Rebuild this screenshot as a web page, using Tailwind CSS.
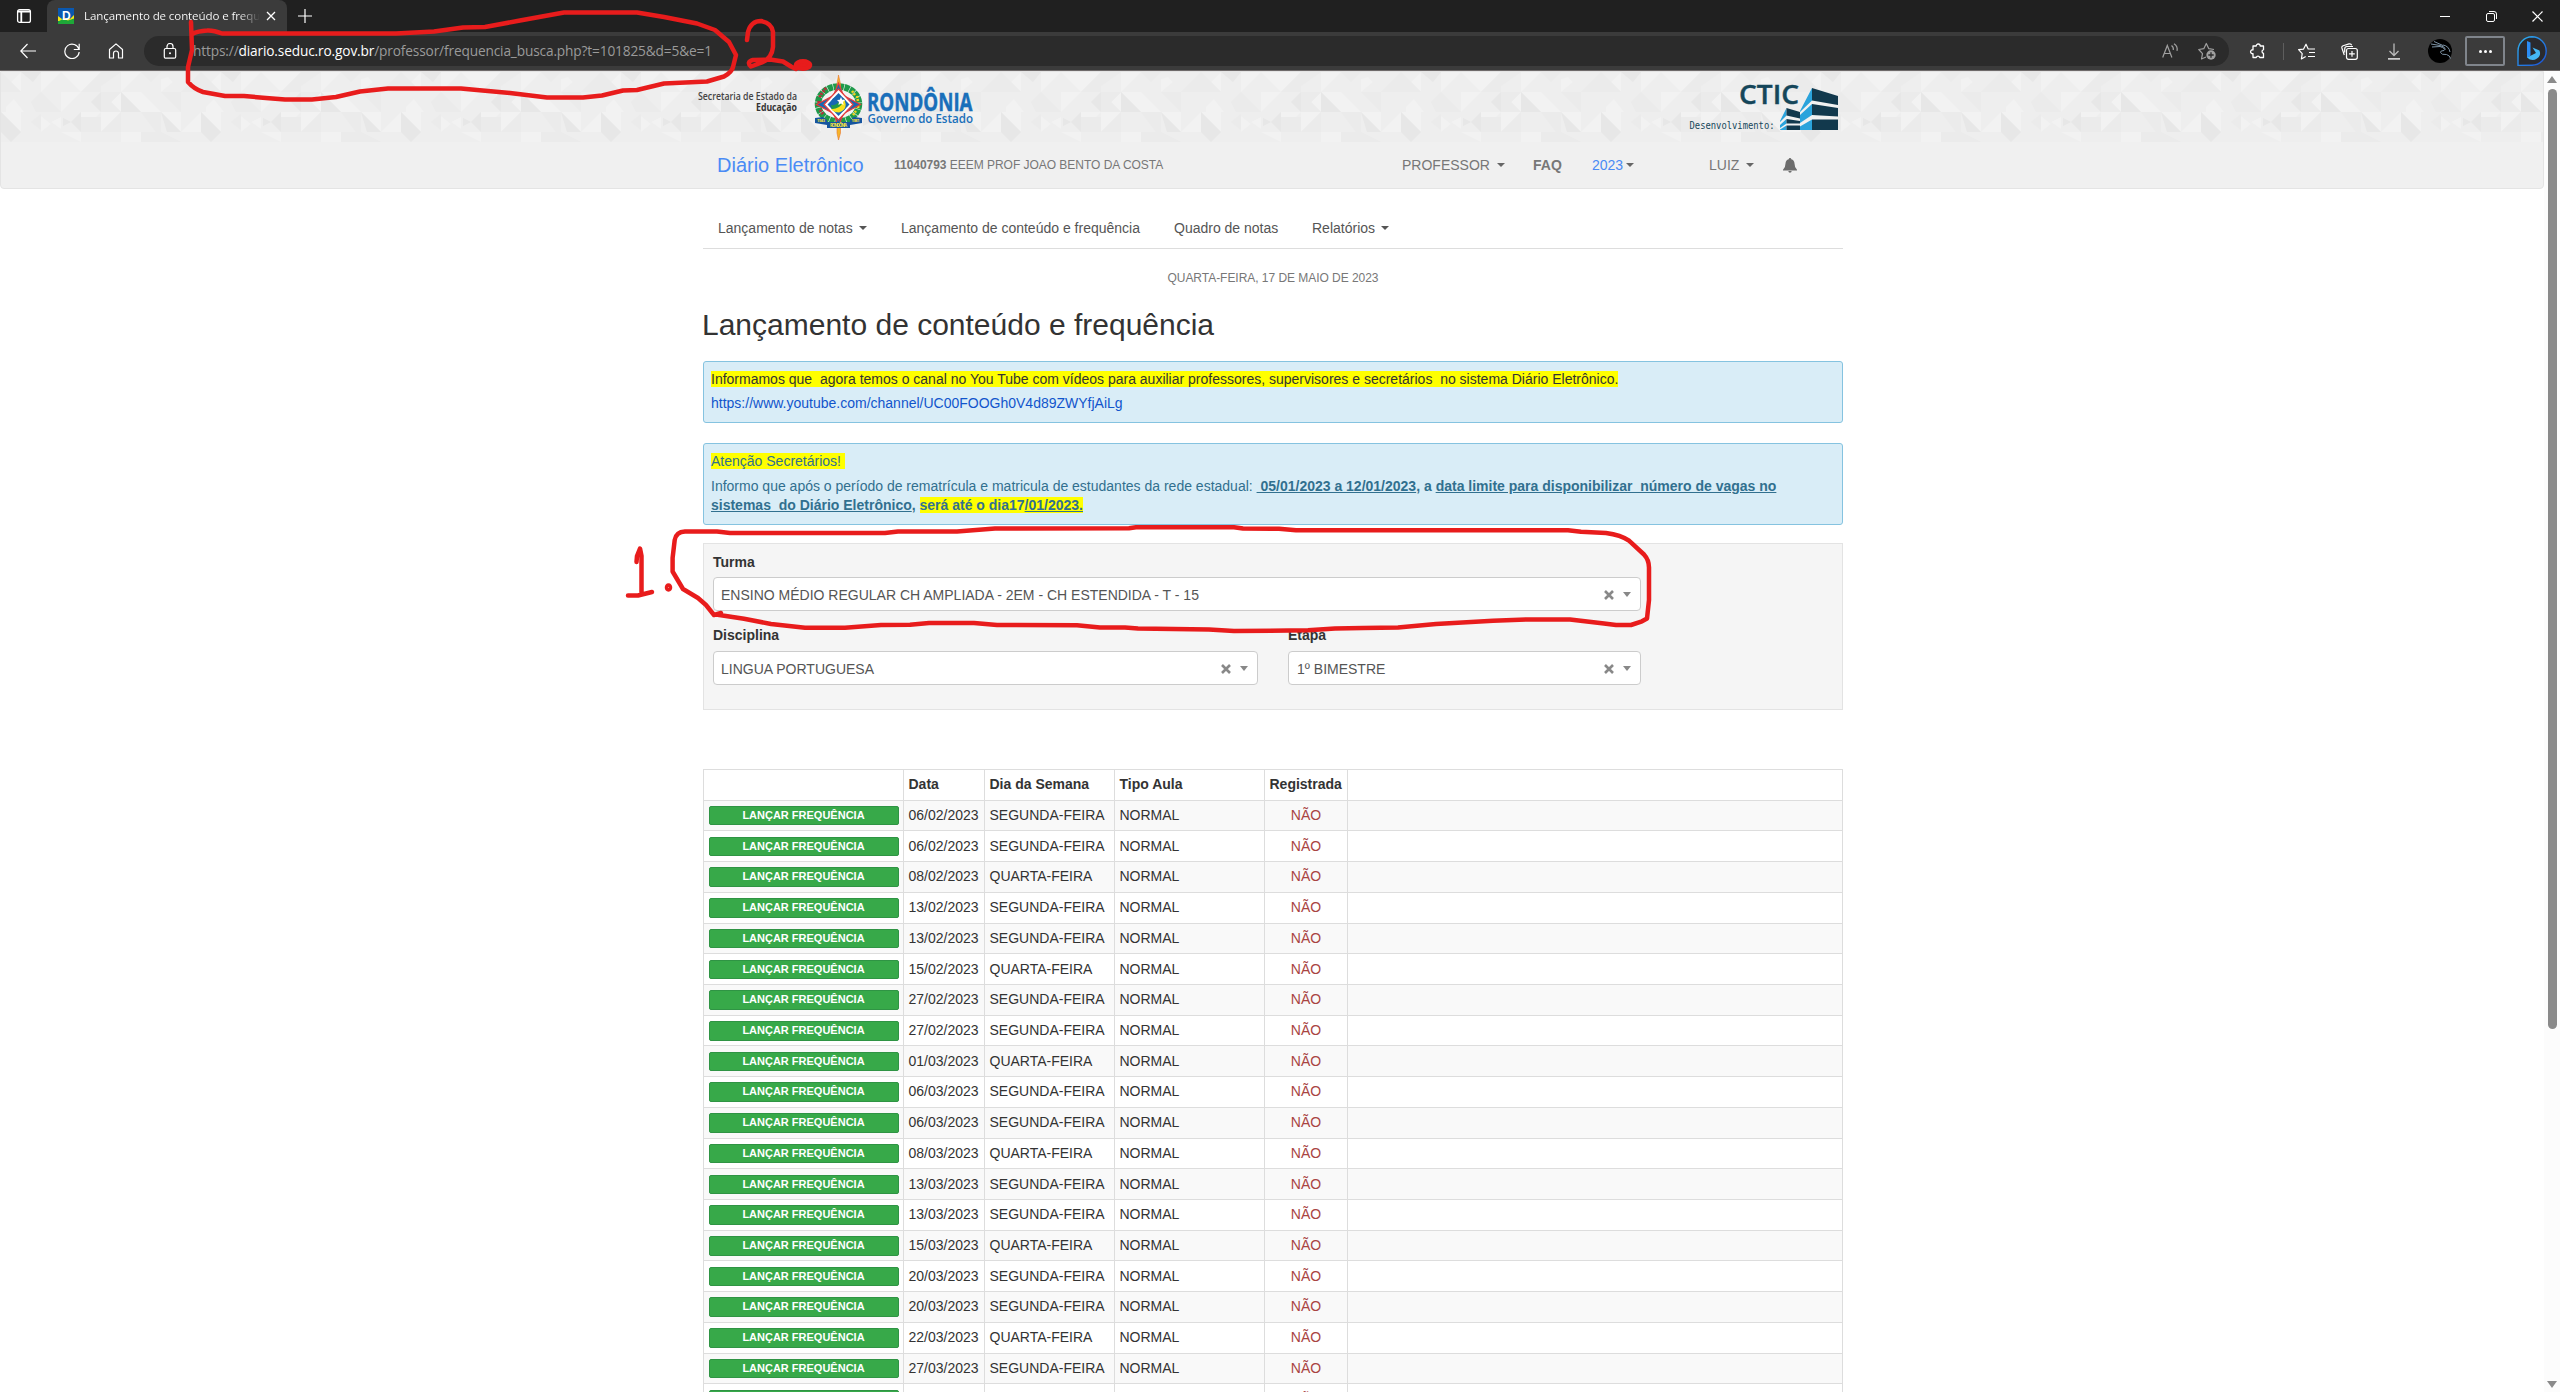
<!DOCTYPE html>
<html lang="pt-BR">
<head>
<meta charset="utf-8">
<title>Lançamento de conteúdo e frequência</title>
<script src="https://cdn.jsdelivr.net/npm/@tailwindcss/browser@4"></script>
</head>
<body class="relative flex h-[1392px] w-[2560px] flex-col overflow-hidden bg-white font-['Liberation_Sans',sans-serif] text-sm leading-5 text-[#333]">

<!-- Tab strip -->
<div class="flex h-8 shrink-0 items-stretch bg-[#202020] text-white">
  <div class="flex w-[47px] items-center pl-4">
    <svg class="size-4" viewBox="0 0 16 16" fill="none" stroke="#fff" stroke-width="1.3"><rect x="1.6" y="1.6" width="12.8" height="12.8" rx="2"/><path d="M2 3.5h12M5.3 4.5v9.500" stroke-width="1.800"/></svg>
  </div>
  <div class="flex w-[240px] items-center rounded-t-lg bg-[#3b3b3b] pl-[11px]">
    <svg class="size-4" viewBox="0 0 16 16"><rect width="16" height="16" fill="#0a58b0"/><path d="M0 8l4 3 4-1 4 1 4-4v6H0z" fill="#f5e614"/><path d="M0 16v-2.500l5-2.500 5 1.500 6-2V16z" fill="#1ea838"/><text x="4" y="12" font-size="12" font-weight="700" fill="#fff" font-family="Liberation Sans, sans-serif">D</text></svg>
    <div class="ml-[10px] w-[176px] overflow-hidden whitespace-nowrap bg-linear-to-r from-white from-88% to-transparent bg-clip-text font-['Open_Sans',sans-serif] text-[11.6px] leading-4 tracking-[-0.13px] text-transparent">Lançamento de conteúdo e frequência</div>
    <svg class="ml-[5px] size-3" viewBox="0 0 12 12" stroke="#fff" stroke-width="1.3"><path d="M2 2l8 8M10 2l-8 8"/></svg>
  </div>
  <div class="flex items-center pl-[10px]"><svg class="size-4" viewBox="0 0 16 16" stroke="#fff" stroke-width="1.200"><path d="M8 1v14M1 8h14"/></svg></div>
  <div class="ml-auto flex w-[120px] items-center justify-between pr-[17px]">
    <svg class="h-3 w-[10px]" viewBox="0 0 10 12" stroke="#fff"><path d="M0 6.500h10"/></svg>
    <svg class="size-[11px]" viewBox="0 0 11 11" fill="none" stroke="#fff"><rect x=".5" y="2.500" width="8" height="8" rx="1.500"/><path d="M3 .5h5a2.500 2.500 0 0 1 2.500 2.500v5"/></svg>
    <svg class="size-[11px]" viewBox="0 0 11 11" stroke="#fff" stroke-width="1.200"><path d="M.5.5l10 10M10.500.5l-10 10"/></svg>
  </div>
</div>

<!-- Toolbar -->
<div class="flex h-[39px] shrink-0 items-center border-b border-[#6e6a6a] bg-[#3b3b3b]">
  <svg class="ml-5 size-4" viewBox="0 0 16 16" fill="none" stroke="#fff" stroke-width="1.200"><path d="M16 8H.8M7.500 1L.8 8l6.700 7"/></svg>
  <svg class="ml-[28px] size-4" viewBox="0 0 16 16" fill="none" stroke="#fff" stroke-width="1.200"><path d="M15 6.500A7.200 7.200 0 1 0 15.200 9M15.200.8v5.700H9.800"/></svg>
  <svg class="ml-[28px] size-4" viewBox="0 0 16 16" fill="none" stroke="#fff" stroke-width="1.200" stroke-linejoin="round"><path d="M1.500 6.500L8 .9l6.500 5.600V15h-4v-4.500a2.500 2.500 0 0 0-5 0V15h-4z"/></svg>
  <div class="ml-[20px] flex h-[30px] w-[2085px] items-center rounded-full bg-[#2b2b2b]">
    <svg class="ml-[18px] size-4" viewBox="0 0 16 16" fill="none" stroke="#fff" stroke-width="1.200"><rect x="2.300" y="5.500" width="11.400" height="9.700" rx="1.500"/><path d="M5 5.500V3.500a3 3 0 0 1 6 0v2"/><circle cx="8" cy="10.300" r="1" fill="#fff" stroke="none"/></svg>
    <svg class="ml-[15px] h-5 w-[522px]" viewBox="0 0 522 20" font-family="Open Sans, sans-serif" font-size="13.700" fill="#9a9a9a"><text x="0" y="14.800" textLength="519">https://<tspan fill="#fff">diario.seduc.ro.gov.br</tspan>/professor/frequencia_busca.php?t=101825&amp;d=5&amp;e=1</text></svg>
    <svg class="ml-auto h-4 w-[17px]" viewBox="0 0 17 16" fill="none" stroke="#a0a0a0" stroke-width="1.200"><path d="M.7 14.500L5.300 2.500l4.600 12M2.400 10.500h6M9.500 2.500q2.300 1.700 1.800 4.500M12 .8q4 2.700 3 7"/></svg>
    <svg class="mr-[13px] ml-[19px] h-[18px] w-[18px]" viewBox="0 0 18 18" fill="none" stroke="#a0a0a0" stroke-width="1.200" stroke-linejoin="round"><path d="M8 15l-4.500 2 1-5.400L.8 7.500l5-.8L8.300 1.500l2.500 5.200 5.200.8"/><circle cx="13" cy="13" r="4.700" fill="#a0a0a0" stroke="none"/><path d="M13 10.300v5.400M10.300 13h5.400" stroke="#2b2b2b" stroke-width="1.300"/></svg>
  </div>
  <svg class="ml-[20px] size-[17px]" viewBox="0 0 17 17" fill="none" stroke="#fff" stroke-width="1.300" stroke-linejoin="round"><path d="M4 3h3.200a2 2 0 0 1 4 0h3.300v3.700a1.900 1.900 0 0 0 0 3.700v4.100H10.800a1.900 1.900 0 0 0-3.600 0H4v-3.800a2 2 0 1 1 0-3.900z"/></svg>
  <div class="ml-[17px] h-[17px] w-px bg-[#5e5e5e]"></div>
  <svg class="ml-[14px] h-[17px] w-[17px]" viewBox="0 0 17 17" fill="none" stroke="#fff" stroke-width="1.200" stroke-linejoin="round"><path d="M15.500 6H10.200L8 1.200 5.600 6.100l-5 .6 3.600 3.900-.8 5.400 4.300-2.500M11 9.500h6M10 13.500h7M11 6h6"/></svg>
  <svg class="ml-[26px] h-[17px] w-[17px]" viewBox="0 0 17 17" fill="none" stroke="#fff" stroke-width="1.200" stroke-linejoin="round"><rect x="5.500" y="5.500" width="10.800" height="10.800" rx="2"/><path d="M11 8v5.800M8 10.900h5.800M3.300 12L.9 5q-.4-1.600 1.200-2.200L8 .9q2-.5 2.700 1.400M3.700 9.500V6q0-2.500 2.300-2.500h6"/></svg>
  <svg class="ml-[30px] h-[17px] w-3" viewBox="0 0 12 17" fill="none" stroke="#fff" stroke-width="1.300"><path d="M6 .5v12M1.500 8L6 12.500 10.500 8" stroke="#bbb"/><path d="M0 15.900h12"/></svg>
  <svg class="ml-[28px] size-6" viewBox="0 0 24 24" fill="none"><circle cx="12" cy="12" r="12" fill="#000"/><path d="M3 5l9 1.500q5 1 5.500 4M6 2.500l9 4M4 8l8-.5q6 2 4 4-4 0-3.500 2 1 2.500 6 2 3.500 1 4 4M15 6q6 1 7 7" stroke="#7d93a5" stroke-width="1"/></svg>
  <div class="ml-[13px] flex h-[30px] w-[40px] items-center justify-center gap-[2px] rounded-xs border-2 border-[#80858c]"><i class="size-[3px] rounded-full bg-white"></i><i class="size-[3px] rounded-full bg-white"></i><i class="size-[3px] rounded-full bg-white"></i></div>
  <svg class="ml-[12px] h-[30px] w-[30px]" viewBox="0 0 30 30"><defs><linearGradient id="bing" x1="0" y1="0" x2="1" y2="1"><stop offset="0" stop-color="#2fb4f0"/><stop offset="1" stop-color="#1b4fd8"/></linearGradient></defs><path d="M15 .8A14.200 14.200 0 1 1 15 29.200L1 29.400V15A14.200 14.200 0 0 1 15 .8z" fill="#2a2a2e" stroke="url(#bing)" stroke-width="1.400"/><path d="M10 5l3.500 1.500v13L10 22z" fill="#2a8cf5"/><path d="M10 21.500L19 17l-3.500-5.500 7 3q2 5-2.500 8-5 3.500-10-1z" fill="#45b8f5"/></svg>
</div>

<!-- Page -->
<div class="flex min-h-0 flex-1">
  <div class="flex w-[2544px] flex-col">
    <header class="h-[118px] shrink-0 rounded-b border border-[#e4e4e4] bg-[#f0f0f0]">
      <div class="relative h-[70px]">
        <svg class="absolute inset-0 h-[70px] w-[2542px]">
          <defs><pattern id="tri" x="100" y="0" width="200" height="70" patternUnits="userSpaceOnUse">
            <rect width="200" height="70" fill="#eeeeee"/>
            <g fill="#f2f2f2"><path d="M20 0h20L20 20zM60 20V7l7-2 5 5-12 10zM110 10l10-10v20zM140 0h20l20 20 20-20h-40l-20 20zM10 30l10-10v20zM20 20h20l20 20H40zM160 20h20l-20 20zM0 40h20L0 60zM60 40h20v20zM80 60l20-20v20zM100 40h20v20zM140 44l10 8-10 8zM180 40h20l-20 20zM20 60h20v10H20zM160 60h20v10zM105 35l8-8 10 13h-18zM150 50l10-5v12z"/></g>
            <g fill="#ebebeb"><path d="M0 0h20L0 14zM40 0h20L50 10zM180 20l20-20v20zM0 20h20L10 30l10 10H0zM60 20h20v20zM130 30l10-10 20 20h-25zM90 10L100 0l20 20H80zM40 40h20v20H55zM0 60l20-20v20zM130 50l10-8v16zM40 60h20l20 10H40zM180 45h20v15h-20z"/></g>
            <g fill="#e7e7e7"><path d="M20 20l20 20H20zM120 0h20l-8 10zM60 40l20 20H66zM100 40l20 20h-20zM170 50l10-10v20zM190 30l10-10v20zM100 60h20l-10 10zM162 46l8 4-8 4z"/></g>
          </pattern></defs>
          <rect width="2542" height="70" fill="url(#tri)"/>
        </svg>
        <svg class="absolute top-0 left-[689px] h-[70px] w-[300px]" viewBox="690 72 300 70" font-family="Open Sans, sans-serif">
          <text x="698" y="100" font-size="10" fill="#444" font-weight="600" textLength="99" lengthAdjust="spacingAndGlyphs">Secretaria de Estado da</text>
          <text x="756" y="111" font-size="10" fill="#333" font-weight="700" textLength="41" lengthAdjust="spacingAndGlyphs">Educação</text>
          <ellipse cx="838.500" cy="104" rx="20.500" ry="17.500" fill="#f3f3f3" stroke="#1f9a4a" stroke-width="6.500" stroke-dasharray="5 .6"/>
          <path d="M826 88l-3 4M822 93l-3 5M819 101l-1 5M820 110l3 4" stroke="#b5303a" stroke-width="3" stroke-dasharray="2 1"/>
          <path d="M852 91l3 4M857 96l1 5M859 103l-1 5M856 111l-3 4" stroke="#f4d320" stroke-width="2.500" stroke-dasharray="2 1"/>
          <path d="M838.500 75l2 9v49l-2 7-1.500-7V84z" fill="#f5b52a" stroke="#e9762b" stroke-width=".6"/>
          <path d="M838.500 83l5 12.500 17 9-17 9-5 12.500-5-12.500-17-9 17-9z" fill="#1767b3" stroke="#e33c3c" stroke-width="1.200"/>
          <path d="M838.500 89l14.500 15.500-14.500 15.500-14.500-15.500z" fill="#fff" stroke="#e33c3c" stroke-width="1.200"/>
          <path d="M838.500 93l11 11.500-11 11.500-11-11.500z" fill="#1767b3"/>
          <circle cx="838.500" cy="104.500" r="8" fill="#1767b3"/><path d="M831 109q9-1 13-10 5 10-5 13.500-5 0-8-3.500z" fill="#f6e11d"/><path d="M831 105q6 1 9-5l3 2q-3 7-11 7z" fill="#1f9a4a"/><path d="M841 97l1.200 2.800 2.800.3-2 2 .6 3-2.600-1.600-2.600 1.600.6-3-2-2 2.800-.3z" fill="#fff"/>
          <path d="M815 118l8-1 4 3v5l-12-2zM862 118l-8-1-4 3v5l12-2zM827 122h23v6h-23z" fill="#16559f"/><text x="830" y="127" font-size="4.500" fill="#f4e23a" font-weight="700" textLength="17">RONDÔNIA</text><text x="817" y="122.300" font-size="4" fill="#f4e23a" font-weight="700" textLength="8">1943</text><text x="851.500" y="122.300" font-size="4" fill="#f4e23a" font-weight="700" textLength="8">1981</text>
          <text x="867" y="111" font-size="25.500" fill="#196fba" stroke="#196fba" stroke-width=".5" font-weight="700" textLength="105.500" lengthAdjust="spacingAndGlyphs">RONDÔNIA</text>
          <text x="867.500" y="123" font-size="12.500" fill="#196fba" font-weight="600" textLength="105.500" lengthAdjust="spacingAndGlyphs">Governo do Estado</text>
        </svg>
        <svg class="absolute top-0 left-[1679px] h-[70px] w-[180px]" viewBox="1680 72 180 70">
          <text x="1739" y="104" font-family="Open Sans, sans-serif" font-size="27" font-weight="600" fill="#15465a" stroke="#15465a" stroke-width=".4" textLength="60" lengthAdjust="spacingAndGlyphs">CTIC</text>
          <text x="1689.500" y="129" font-family="DejaVu Sans Mono, monospace" font-size="10" fill="#15465a" textLength="85" lengthAdjust="spacingAndGlyphs">Desenvolvimento:</text>
          <path d="M1800 111l12-23v42h-12zM1780 121l6.500-13v22h-6.500z" fill="#2aa3dc"/>
          <path d="M1786.500 108l13.500 4v18h-13.500zM1812 88l26 8v34h-26z" fill="#12394d"/>
          <path d="M1780 122l6.500-6.500 13.500 3v2.500l-13.500-2-6.500 6zM1780 128l6.500-4.500h13.500v2h-13.500l-6.500 4zM1800 112l12-11.500 26 4.500v3l-26-4-12 11zM1800 123l12-8 26 1.500v3h-26l-12 7z" fill="#f1f1f1"/>
        </svg>
      </div>
      <nav class="ml-[716px] flex h-[46px] items-center text-[#777]">
        <a class="w-[177px] text-[20px] text-[#4a8bf5]">Diário Eletrônico</a>
        <span class="w-[508px] text-xs tracking-[-0.03px]"><b>11040793</b> EEEM PROF JOAO BENTO DA COSTA</span>
        <a class="flex w-[131px] items-center gap-[7px]">PROFESSOR<i class="border-x-4 border-t-4 border-x-transparent border-t-[#666]"></i></a>
        <b class="w-[59px]">FAQ</b>
        <a class="flex w-[117px] items-center gap-[3px] text-[#4a8bf5]">2023<i class="border-x-4 border-t-4 border-x-transparent border-t-[#666]"></i></a>
        <a class="flex w-[74px] items-center gap-[7px]">LUIZ<i class="border-x-4 border-t-4 border-x-transparent border-t-[#666]"></i></a>
        <svg class="h-[15px] w-[14px]" viewBox="0 0 14 15" fill="#6c6c6c"><path d="M7 0q1.200 0 1.300 1.200 3 .8 3.200 4.300 0 4 2.500 6.300v.7H0v-.7q2.500-2.300 2.500-6.300.2-3.500 3.200-4.300Q5.800 0 7 0zM5.300 13h3.400Q8.500 14.700 7 14.700T5.300 13z"/></svg>
      </nav>
    </header>

    <main class="ml-[703px] flex w-[1140px] flex-col pt-[18px]">
      <nav class="flex h-[42px] items-center border-b border-[#ddd] pl-[15px] text-[#555]">
        <a class="flex w-[183px] items-center gap-[6px]">Lançamento de notas<i class="border-x-4 border-t-4 border-x-transparent border-t-[#555]"></i></a>
        <a class="w-[273px]">Lançamento de conteúdo e frequência</a>
        <a class="w-[138px]">Quadro de notas</a>
        <a class="flex items-center gap-[6px]">Relatórios<i class="border-x-4 border-t-4 border-x-transparent border-t-[#555]"></i></a>
      </nav>
      <p class="mt-[19px] text-center text-xs leading-5 tracking-[-0.04px] text-[#777]">QUARTA-FEIRA, 17 DE MAIO DE 2023</p>
      <h1 class="mt-[20px] -ml-px text-[30px] leading-[33px]">Lançamento de conteúdo e frequência</h1>

      <section class="mt-[20px] h-[62px] rounded-[3px] border border-[#85c3e0] bg-[#d9edf7] px-[7px] pt-[7px]">
        <p><span class="bg-[#ff0] whitespace-pre">Informamos que  agora temos o canal no You Tube com vídeos para auxiliar professores, supervisores e secretários  no sistema Diário Eletrônico.</span></p>
        <p class="mt-1 text-[#1155cc]">https://www.youtube.com/channel/UC00FOOGh0V4d89ZWYfjAiLg</p>
      </section>

      <section class="mt-[20px] h-[82px] rounded-[3px] border border-[#85c3e0] bg-[#d9edf7] px-[7px] pt-[7px] text-[#31708f]">
        <p><span class="bg-[#ff0] whitespace-pre">Atenção Secretários! </span></p>
        <p class="mt-[6px] leading-[19.400px] whitespace-pre">Informo que após o período de rematrícula e matricula de estudantes da rede estadual: <b><u> 05/01/2023 a 12/01/2023</u>, a <u>data limite para disponibilizar  número de vagas no</u></b>
<b><u>sistemas  do Diário Eletrônico</u>, <span class="bg-[#ff0]">será até o dia17<u>/01/2023.</u></span></b></p>
      </section>

      <section class="mt-[18px] h-[167px] border border-[#e3e3e3] bg-[#f5f5f5] pt-[8px] pl-[9px]">
        <label class="block font-bold">Turma</label>
        <div class="mt-[5px] flex h-[34px] w-[928px] items-center rounded border border-[#ccc] bg-white pt-px pl-[7px] text-[#555]">ENSINO MÉDIO REGULAR CH AMPLIADA - 2EM - CH ESTENDIDA - T - 15
          <svg class="ml-auto size-[10px]" viewBox="0 0 10 10" stroke="#888" stroke-width="2.600"><path d="M1 1l8 8M9 1L1 9"/></svg>
          <i class="mr-[9px] ml-[9px] border-x-4 border-t-[5px] border-x-transparent border-t-[#888]"></i>
        </div>
        <div class="mt-[14px] flex gap-[30px]">
          <div>
            <label class="block font-bold">Disciplina</label>
            <div class="mt-[6px] flex h-[34px] w-[545px] items-center rounded border border-[#ccc] bg-white pt-px pl-[7px] text-[#555]">LINGUA PORTUGUESA
              <svg class="ml-auto size-[10px]" viewBox="0 0 10 10" stroke="#888" stroke-width="2.600"><path d="M1 1l8 8M9 1L1 9"/></svg>
              <i class="mr-[9px] ml-[9px] border-x-4 border-t-[5px] border-x-transparent border-t-[#888]"></i>
            </div>
          </div>
          <div>
            <label class="block font-bold">Etapa</label>
            <div class="mt-[6px] flex h-[34px] w-[353px] items-center rounded border border-[#ccc] bg-white pt-px pl-2 text-[#555]">1º BIMESTRE
              <svg class="ml-auto size-[10px]" viewBox="0 0 10 10" stroke="#888" stroke-width="2.600"><path d="M1 1l8 8M9 1L1 9"/></svg>
              <i class="mr-[9px] ml-[9px] border-x-4 border-t-[5px] border-x-transparent border-t-[#888]"></i>
            </div>
          </div>
        </div>
      </section>

      <div id="grid" class="mt-[59px] border border-b-0 border-[#ddd]">
        <div class="grid h-[30.700px] grid-cols-[200px_81px_130px_150px_83px_1fr] divide-x divide-[#ddd] border-b border-[#ddd] font-bold *:px-[4.5px] *:pt-[4px]">
          <div></div><div>Data</div><div>Dia da Semana</div><div>Tipo Aula</div><div>Registrada</div><div></div>
        </div>
      </div>
    </main>
  </div>

  <!-- Scrollbar -->
  <div class="flex flex-1 flex-col items-center bg-[#fcfcfc]">
    <i class="mt-[5px] border-x-[5px] border-b-[7px] border-x-transparent border-b-[#8a8a8a]"></i>
    <div class="mt-[6px] h-[940px] w-[9px] rounded-full bg-[#8a8a8a]"></div>
    <i class="mt-auto mb-[4px] border-x-[5px] border-t-[7px] border-x-transparent border-t-[#8a8a8a]"></i>
  </div>
</div>

<!-- Hand-drawn notes -->
<svg class="absolute inset-0 h-[1392px] w-[2560px]" viewBox="0 0 2560 1392" fill="none" stroke="#e81c1c" stroke-width="4.500" stroke-linecap="round" stroke-linejoin="round">
  <path d="M191 22L192 50 188 67 188 82Q194 89 203 92L225 96 244 96 266 98 285 99.500 312 99.500 336 97 360 91.500 388 88.500 461 88.500 477 90 510 93 547 97.500 583 97.500 602 95.500 623 90.500 637 90 664 83.500 707 81.500 724 76.500Q732 72 733 67L736 55 729 42 715 30 697 23.500 664 17 637 12.500 564 12.500 520 20.500 485 27 463 27.500 434 31.500 396 33.500 222 33.500Q213 30 207 30.500 198 31 192 34"/>
  <path d="M747 40L748 32Q751 21 761 21 772 23 773 32L773 47Q772 58 762 62.500L751 66.500Q746 62 753 60L770 59.500 783 61.500 791 66.500 796 69"/>
  <ellipse cx="803" cy="65" rx="7" ry="3.700" fill="#e81c1c"/>
  <path d="M721 613L714 615 706 605 698 598 683 589 672.600 571.500 672.600 558 674.700 540Q676 532 685 531.500L717 531.500 730 533 885 533 898 531.500 957 531.500 995 528.500 1129 528.300 1136 527.300 1234 527.300 1243 528.600 1279 528.700 1296 530.300 1568 530.300 1581 531.700 1606 533Q1621 535 1629 540.700L1644 554.500Q1649 560 1649 567.500L1649 600 1647 618.500 1642 621.300 1631 625 1616 625 1604 623.500 1570 619.500 1526 619.500 1493 620.700 1436 624 1398 627.500 1363 628 1335 628.600 1308 630.300 1234 631 1209 629.500 1138 628.500 1125 627.500 1100 627.500 1077 625.300 997 625 974 623 929 623 910 624.700 881 625 845 627.700 805 627.700 771 624 744 618.700 716 614.500"/>
  <path d="M636.500 562L637 556 640 548.500 641.500 556V592M628 595.500H638L652 592"/>
  <ellipse cx="668.500" cy="587.500" rx="1.500" ry="2"/>
</svg>

<script>
  const Q = 'QUARTA-FEIRA', S = 'SEGUNDA-FEIRA';
  const days = [['06/02',S],['06/02',S],['08/02',Q],['13/02',S],['13/02',S],['15/02',Q],['27/02',S],['27/02',S],['01/03',Q],['06/03',S],['06/03',S],['08/03',Q],['13/03',S],['13/03',S],['15/03',Q],['20/03',S],['20/03',S],['22/03',Q],['27/03',S],['27/03',S]];
  document.getElementById('grid').insertAdjacentHTML('beforeend', days.map(([d, w]) => `
    <div class="grid h-[30.720px] grid-cols-[200px_81px_130px_150px_83px_1fr] divide-x divide-[#ddd] border-b border-[#ddd] odd:bg-white even:bg-[#f9f9f9] *:px-[4.5px] *:pt-[4.3px]">
      <div><div class="mt-[1px] h-[19.500px] rounded-xs border border-[#2f9444] bg-[#37a949] text-center text-[11px] leading-[17px] font-bold text-white">LANÇAR FREQUÊNCIA</div></div>
      <div>${d}/2023</div><div>${w}</div><div>NORMAL</div><div class="text-center text-[#a94442]">NÃO</div><div></div>
    </div>`).join(''));
</script>
</body>
</html>
